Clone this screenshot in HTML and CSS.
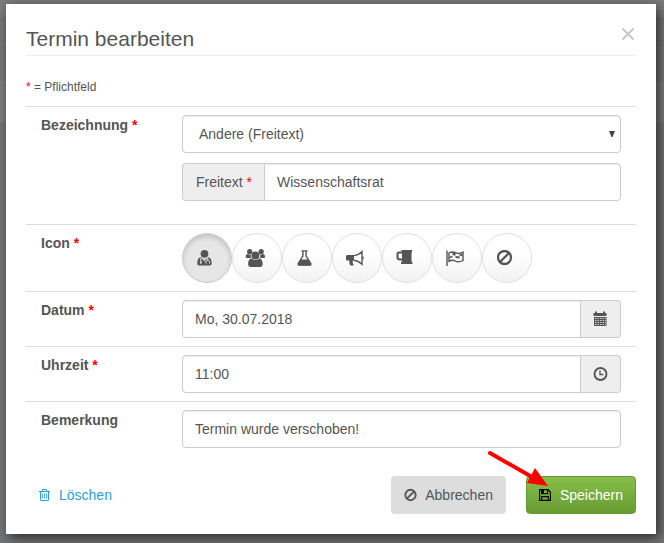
FILE: index.html
```html
<!DOCTYPE html>
<html lang="de">
<head>
<meta charset="utf-8">
<meta name="viewport" content="width=device-width, initial-scale=1">
<title>Termin bearbeiten</title>
<link rel="stylesheet" href="styles.css">
</head>
<body>
<form class="modal" role="dialog" aria-labelledby="title">
  <header class="modal-header">
    <h1 id="title">Termin bearbeiten</h1>
    <button type="button" class="close" aria-label="Schließen"><svg width="14" height="14" viewBox="0 0 14 14"><path d="M1.500 1.500l11 11M12.500 1.500l-11 11" stroke="#c8c8c8" stroke-width="2"/></svg></button>
  </header>
  <p class="hint"><span class="req">*</span> = Pflichtfeld</p>

  <div class="row row-name">
    <label class="label" for="name">Bezeichnung <span class="req">*</span></label>
    <div class="fields">
      <div class="select-wrap">
        <select id="name" class="control"><option>Andere (Freitext)</option></select>
        <svg class="caret" width="6" height="6" viewBox="0 0 6 6"><path d="M0 0h6L3.500 6h-1z" fill="#444"/></svg>
      </div>
      <div class="group">
        <label class="addon addon-left" for="free">Freitext&nbsp;<span class="req">*</span></label>
        <input id="free" class="control" type="text" value="Wissenschaftsrat">
      </div>
    </div>
  </div>

  <div class="row">
    <span class="label" id="icon-label">Icon <span class="req">*</span></span>
    <div class="icons" role="group" aria-labelledby="icon-label">
      <button type="button" class="icon active" aria-label="Arzt" aria-pressed="true"><svg width="16" height="18" viewBox="0 0 16 18"><circle cx="7.500" cy="4.800" r="3.900"/><path d="M3.500 8.300C1 9 .3 11.500.3 14.300c0 1.400.8 2.200 2 2.200h10.400c1.200 0 2-.8 2-2.200 0-2.800-.7-5.300-3.200-6l-4 2.700z"/><path d="M3.800 9v4.500M10.800 9v2.300M9.100 14.500V13c0-2.300 3.500-2.300 3.500 0v1.500M5.200 9.800l2.300 2.200 2.300-2.200" fill="none" stroke="#e6e6e6"/><circle cx="3.800" cy="13.800" r="1" fill="#e6e6e6"/></svg></button>
      <button type="button" class="icon" aria-label="Gruppe"><svg width="20" height="18" viewBox="0 0 20 18"><g transform="translate(.700)"><circle cx="4" cy="2.700" r="2.600"/><circle cx="15.500" cy="2.700" r="2.600"/><path d="M0 8c0-1.700.7-3 2-3 .7.600 2.700 1 3.400.6C4.800 7 5 8 5.600 9H2C.7 9 0 9 0 8zM19.300 8c0-1.700-.7-3-2-3-.7.600-2.300 1-3 .6C14.900 7 14.700 8 14 9h3.300c1.300 0 2 0 2-1z"/><circle cx="9.700" cy="6.500" r="4"/><path d="M6 9.500c-2.600 0-3.600 2.500-3.600 5.500 0 2 1 3 2.600 3h9.400c1.600 0 2.600-1 2.600-3 0-3-1-5.500-3.600-5.500-2.400 2-5 2-7.400 0z"/></g></svg></button>
      <button type="button" class="icon" aria-label="Labor"><svg width="16" height="16" viewBox="0 0 16 16"><path d="M4.500.9h6M5.900 1v5L1.300 13.400c-.5 1 0 1.700 1 1.700h10.400c1 0 1.500-.7 1-1.700L9.100 6V1" fill="none" stroke="#555" stroke-width="1.400"/><path d="M4 9.500h7l3.200 5-.8 1H1.600l-.8-1z"/></svg></button>
      <button type="button" class="icon" aria-label="Ankündigung"><svg width="18" height="16" viewBox="0 0 18 16"><path d="M1.500 5H8v5.500H7c-.7 1.500-.2 3 .8 4.500-1.300.8-2.800.7-3.800-.1-.5-1.500-.9-2.900-.5-4.400h-2C.5 10.500 0 10 0 9V6.500C0 5.500.5 5 1.500 5z"/><path d="M8 5.600C11.500 5.200 13.500 4 16 1.700v12.600c-2.500-2.500-4.500-3.700-8-4.100" fill="none" stroke="#555" stroke-width="1.400"/><path d="M16.500 6.300c1.700.3 1.700 3 0 3.300z"/></svg></button>
      <button type="button" class="icon" aria-label="Umtrunk"><svg width="18" height="16" viewBox="0 0 18 16"><path d="M5.500 0H16v2l-.5 1v8.500l1 1V14H5v-1.500l1-1V3l-.5-1z"/><path d="M6.500 2.500H3q-1.500 0-1.500 1.500v3C1.500 8.500 2.500 9.500 4 9.500h2.500" fill="none" stroke="#555" stroke-width="2"/></svg></button>
      <button type="button" class="icon" aria-label="Ziel"><svg width="18" height="16" viewBox="0 0 18 16"><path d="M1 .5V16" stroke="#555" stroke-width="1.400"/><path d="M3 3c2.400-1.500 4-1.500 6.300-.3 2.300 1.200 4.700 1 7.700-.5v8.300c-2.900 1.500-5.400 1.700-7.700.5C7 9.800 5.400 9.800 3 11.300z" fill="none" stroke="#555" stroke-width="1.400"/><path d="M6.500 2.200l3 .8v2.800L6.500 5zM3.500 6.800l3-1.300v1.700l-3 1.300zM9.500 6l4 .6v1.900l-4-.6zM13.500 4.500L16.500 3.500v2l-3 1z"/></svg></button>
      <button type="button" class="icon" aria-label="Kein Icon"><svg width="16" height="16" viewBox="0 0 16 16"><g fill="none" stroke="#555" stroke-width="2.300"><circle cx="7.500" cy="7.500" r="6.500"/><path d="M3 12l9-9"/></g></svg></button>
    </div>
  </div>

  <div class="row">
    <label class="label" for="date">Datum <span class="req">*</span></label>
    <div class="group">
      <input id="date" class="control" type="text" value="Mo, 30.07.2018">
      <button type="button" class="addon addon-right" aria-label="Kalender"><svg width="15" height="16" viewBox="0 0 15 16"><path d="M.5 2H2V.5h2V2h6V.5h2V2h1.500v3H.5zM1 6h12.500v9H1z"/><path d="M2 7.500h11M2 9.500h11M2 11.500h11M2 13.500h11" stroke="#eee" stroke-width=".8" stroke-dasharray="1.500 1"/></svg></button>
    </div>
  </div>

  <div class="row">
    <label class="label" for="time">Uhrzeit <span class="req">*</span></label>
    <div class="group">
      <input id="time" class="control" type="text" value="11:00">
      <button type="button" class="addon addon-right" aria-label="Uhrzeit wählen"><svg width="15" height="16" viewBox="0 0 15 16"><g fill="none" stroke="#555"><circle cx="7.500" cy="8" r="6" stroke-width="1.900"/><path d="M7 4.500v4h3.500" stroke-width="1.300"/></g></svg></button>
    </div>
  </div>

  <div class="row">
    <label class="label" for="note">Bemerkung</label>
    <input id="note" class="control" type="text" value="Termin wurde verschoben!">
  </div>

  <footer class="actions">
    <button type="button" class="btn btn-link"><svg width="13" height="14" viewBox="0 0 13 14"><g fill="none" stroke="#2b9fe0"><path d="M1 3.500h11M4.500 3V1.500h4V3M2.500 3.500V12q0 .5.500.5h7q.5 0 .5-.5V3.500"/><path d="M4.500 5.500v5M6.500 5.500v5M8.500 5.500v5" stroke-width=".8"/></g></svg>Löschen</button>
    <button type="button" class="btn btn-cancel"><svg width="13" height="14" viewBox="0 0 13 14"><g fill="none" stroke="#555" stroke-width="1.900"><circle cx="6.500" cy="7" r="5.200"/><path d="M2.800 10.700l7.400-7.400"/></g></svg>Abbrechen</button>
    <button type="submit" class="btn btn-save"><svg width="13" height="12" viewBox="0 0 13 12"><path d="M.6.6h8.400l2.400 2.400v8.400H.6zM2.700 11V7.600h6.600V11M2.700.6v4.200h6V.6" fill="none" stroke="#000" stroke-width="1.100"/><path d="M2.500.5H5v4.200H2.500z" fill="#000"/></svg>Speichern
      <svg class="pointer" width="62" height="40" viewBox="0 0 62 40"><path d="M4 4l42 24" stroke="#f00" stroke-width="4" stroke-linecap="round"/><path d="M62 37L49 19 41 34z" fill="#f00"/></svg>
    </button>
  </footer>
</form>
</body>
</html>
```
FILE: styles.css
```css
* { box-sizing: border-box; }

body {
  margin: 0;
  padding: 4px 8px 9px 6px;
  color: #555;
  font: 14px/20px "Liberation Sans", Arial, sans-serif;
  background: linear-gradient(#7b7c7c 0 19px, #6c7075 19px 20px, #77797c 20px 40px, #707276 40px 41px, #77797c 41px 81px, #808080 81px 122px, #747678 122px);
}

.modal {
  padding: 20px;
  background: #fff;
  box-shadow: 3px 4px 12px rgba(0, 0, 0, .65);
}

.modal-header {
  display: flex;
  justify-content: space-between;
  align-items: flex-start;
  border-bottom: 1px solid #eee;
}

h1 {
  margin: 0;
  padding-bottom: 2px;
  font-size: 21px;
  font-weight: normal;
  line-height: 29px;
}

button, input, select { font: inherit; color: inherit; }

button { cursor: pointer; }

svg { flex: none; fill: #555; }

.close {
  display: flex;
  padding: 3px 1px;
  border: 0;
  background: none;
}

.hint {
  margin: 21px 0 9px;
  font-size: 12px;
}

.req { color: #f00; }

.row {
  display: grid;
  grid-template-columns: 141px 1fr;
  padding: 8px 15px;
  border-top: 1px solid #ddd;
}

.row-name { padding-bottom: 23px; }

.label { font-weight: bold; }

.fields {
  display: grid;
  gap: 10px;
}

.control {
  width: 100%;
  min-width: 0;
  height: 38px;
  padding: 8px 12px;
  border: 1px solid #ccc;
  border-radius: 4px;
  background: #fff;
  box-shadow: inset 0 1px 1px rgba(0, 0, 0, .075);
}

.select-wrap {
  display: grid;
  align-items: center;
}

.select-wrap > * { grid-area: 1 / 1; }

.select-wrap select {
  padding-left: 16px;
  appearance: none;
}

.caret {
  justify-self: end;
  margin-right: 6px;
  pointer-events: none;
}

.group { display: flex; }

.group .control { flex: 1; }

.addon {
  display: flex;
  flex: none;
  align-items: center;
  justify-content: center;
  padding: 0 12px;
  border: 1px solid #ccc;
  border-radius: 4px;
  background: #eee;
}

.addon-left {
  padding-left: 13px;
  border-right: 0;
  border-radius: 4px 0 0 4px;
}

.addon-left + .control { border-radius: 0 4px 4px 0; }

.addon-right {
  border-left: 0;
  border-radius: 0 4px 4px 0;
}

.group .control:first-child { border-radius: 4px 0 0 4px; }

.icons {
  display: flex;
  flex-wrap: wrap;
}

.icon {
  display: flex;
  align-items: center;
  justify-content: center;
  width: 50px;
  height: 50px;
  padding: 0 4px 0 0;
  border: 1px solid #e0e0e0;
  border-radius: 50%;
  background: linear-gradient(#fff 40%, #f2f2f2);
}

.icon.active {
  border-color: #ccc;
  background: #e6e6e6;
  box-shadow: inset 0 3px 5px rgba(0, 0, 0, .15);
}

.actions {
  display: flex;
  gap: 20px;
  margin-top: 20px;
}

.btn {
  display: flex;
  align-items: center;
  gap: 8px;
  height: 38px;
  padding: 0 12px;
  border: 1px solid transparent;
  border-radius: 4px;
}

.btn-link {
  margin-right: auto;
  padding-left: 11px;
  background: none;
  color: #2b9fe0;
}

.btn-cancel { background: #ddd; }

.btn-save {
  position: relative;
  border-color: #669c33;
  background: linear-gradient(#87bf49, #689b33);
  color: #fff;
}

.pointer {
  position: absolute;
  top: -28px;
  left: -41px;
  pointer-events: none;
}
```
